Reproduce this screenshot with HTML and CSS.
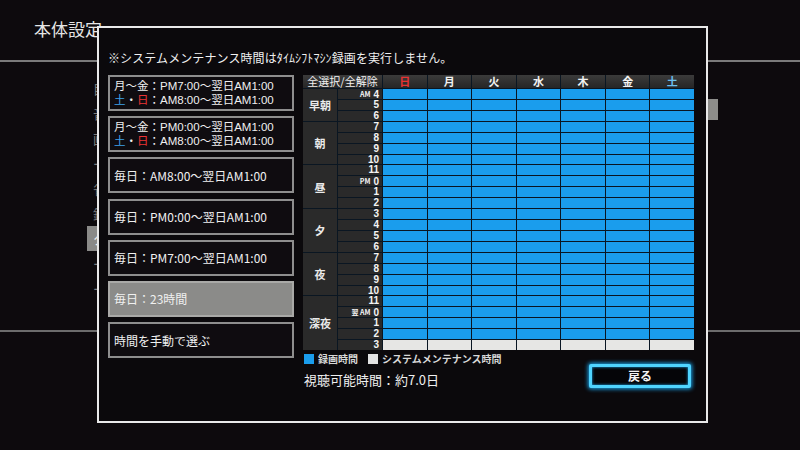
FILE: index.html
```html
<!DOCTYPE html>
<html lang="ja">
<head>
<meta charset="utf-8">
<link rel="stylesheet" href="styles.css">
</head>
<body>
<div class="screen">
  <div class="screen-head"><span class="screen-title">本体設定</span></div>
  <div class="screen-mid">
    <ul class="bg-menu">
      <li>目</li><li>音</li><li>画</li><li>ー</li><li>省</li><li>録</li><li class="sel">タ</li><li>ー</li><li>ー</li>
    </ul>
  </div>
  <div class="screen-foot"></div>
  <div class="scroll-thumb"></div>
</div>

<div class="dialog">
  <p class="notice">※システムメンテナンス時間は<span class="hw">ﾀｲﾑｼﾌﾄﾏｼﾝ</span>録画を実行しません。</p>
  <div class="dlg-body">
    <div class="options">
      <div class="opt two"><span>月～金：PM7:00～翌日AM1:00</span><span><b class="sat">土</b>・<b class="sun">日</b>：AM8:00～翌日AM1:00</span></div>
      <div class="opt two"><span>月～金：PM0:00～翌日AM1:00</span><span><b class="sat">土</b>・<b class="sun">日</b>：AM8:00～翌日AM1:00</span></div>
      <div class="opt">毎日：AM8:00～翌日AM1:00</div>
      <div class="opt">毎日：PM0:00～翌日AM1:00</div>
      <div class="opt">毎日：PM7:00～翌日AM1:00</div>
      <div class="opt selected">毎日：23時間</div>
      <div class="opt">時間を手動で選ぶ</div>
    </div>
    <div class="right">
      <div class="grid">
        <div class="hd all">全選択/全解除</div>
        <div class="hd sun">日</div><div class="hd">月</div><div class="hd">火</div><div class="hd">水</div><div class="hd">木</div><div class="hd">金</div><div class="hd sat2">土</div>

        <div class="per" style="grid-row: span 3">早朝</div>
        <div class="hr"><small>AM</small>4</div><div class="c"></div><div class="c"></div><div class="c"></div><div class="c"></div><div class="c"></div><div class="c"></div><div class="c"></div>
        <div class="hr">5</div><div class="c"></div><div class="c"></div><div class="c"></div><div class="c"></div><div class="c"></div><div class="c"></div><div class="c"></div>
        <div class="hr">6</div><div class="c"></div><div class="c"></div><div class="c"></div><div class="c"></div><div class="c"></div><div class="c"></div><div class="c"></div>

        <div class="per" style="grid-row: span 4">朝</div>
        <div class="hr">7</div><div class="c"></div><div class="c"></div><div class="c"></div><div class="c"></div><div class="c"></div><div class="c"></div><div class="c"></div>
        <div class="hr">8</div><div class="c"></div><div class="c"></div><div class="c"></div><div class="c"></div><div class="c"></div><div class="c"></div><div class="c"></div>
        <div class="hr">9</div><div class="c"></div><div class="c"></div><div class="c"></div><div class="c"></div><div class="c"></div><div class="c"></div><div class="c"></div>
        <div class="hr">10</div><div class="c"></div><div class="c"></div><div class="c"></div><div class="c"></div><div class="c"></div><div class="c"></div><div class="c"></div>

        <div class="per" style="grid-row: span 4">昼</div>
        <div class="hr">11</div><div class="c"></div><div class="c"></div><div class="c"></div><div class="c"></div><div class="c"></div><div class="c"></div><div class="c"></div>
        <div class="hr"><small>PM</small>0</div><div class="c"></div><div class="c"></div><div class="c"></div><div class="c"></div><div class="c"></div><div class="c"></div><div class="c"></div>
        <div class="hr">1</div><div class="c"></div><div class="c"></div><div class="c"></div><div class="c"></div><div class="c"></div><div class="c"></div><div class="c"></div>
        <div class="hr">2</div><div class="c"></div><div class="c"></div><div class="c"></div><div class="c"></div><div class="c"></div><div class="c"></div><div class="c"></div>

        <div class="per" style="grid-row: span 4">夕</div>
        <div class="hr">3</div><div class="c"></div><div class="c"></div><div class="c"></div><div class="c"></div><div class="c"></div><div class="c"></div><div class="c"></div>
        <div class="hr">4</div><div class="c"></div><div class="c"></div><div class="c"></div><div class="c"></div><div class="c"></div><div class="c"></div><div class="c"></div>
        <div class="hr">5</div><div class="c"></div><div class="c"></div><div class="c"></div><div class="c"></div><div class="c"></div><div class="c"></div><div class="c"></div>
        <div class="hr">6</div><div class="c"></div><div class="c"></div><div class="c"></div><div class="c"></div><div class="c"></div><div class="c"></div><div class="c"></div>

        <div class="per" style="grid-row: span 4">夜</div>
        <div class="hr">7</div><div class="c"></div><div class="c"></div><div class="c"></div><div class="c"></div><div class="c"></div><div class="c"></div><div class="c"></div>
        <div class="hr">8</div><div class="c"></div><div class="c"></div><div class="c"></div><div class="c"></div><div class="c"></div><div class="c"></div><div class="c"></div>
        <div class="hr">9</div><div class="c"></div><div class="c"></div><div class="c"></div><div class="c"></div><div class="c"></div><div class="c"></div><div class="c"></div>
        <div class="hr">10</div><div class="c"></div><div class="c"></div><div class="c"></div><div class="c"></div><div class="c"></div><div class="c"></div><div class="c"></div>

        <div class="per" style="grid-row: span 5">深夜</div>
        <div class="hr">11</div><div class="c"></div><div class="c"></div><div class="c"></div><div class="c"></div><div class="c"></div><div class="c"></div><div class="c"></div>
        <div class="hr"><small>翌 AM</small>0</div><div class="c"></div><div class="c"></div><div class="c"></div><div class="c"></div><div class="c"></div><div class="c"></div><div class="c"></div>
        <div class="hr">1</div><div class="c"></div><div class="c"></div><div class="c"></div><div class="c"></div><div class="c"></div><div class="c"></div><div class="c"></div>
        <div class="hr">2</div><div class="c"></div><div class="c"></div><div class="c"></div><div class="c"></div><div class="c"></div><div class="c"></div><div class="c"></div>
        <div class="hr">3</div><div class="c m"></div><div class="c m"></div><div class="c m"></div><div class="c m"></div><div class="c m"></div><div class="c m"></div><div class="c m"></div>
      </div>
      <div class="legend">
        <span class="sw blue"></span><span class="lg">録画時間</span>
        <span class="sw white"></span><span class="lg">システムメンテナンス時間</span>
      </div>
      <div class="bottom">
        <span class="avail">視聴可能時間：約7.0日</span>
        <div class="back">戻る</div>
      </div>
    </div>
  </div>
</div>
</body>
</html>
```

FILE: styles.css
```css
html, body {
  margin: 0;
  padding: 0;
}
body {
  width: 800px;
  height: 450px;
  overflow: hidden;
  position: relative;
  background: #0d0a0d;
  font-family: "Noto Sans CJK JP", "Noto Sans", sans-serif;
  color: #f2f2f2;
}
.screen {
  width: 800px;
  height: 450px;
}
.screen-head {
  height: 62px;
  box-sizing: border-box;
  padding: 17px 0 0 34px;
  border-bottom: 2px solid #7a7a7a;
}
.screen-title {
  font-size: 17px;
  line-height: 22px;
  color: #e6e6e6;
}
.screen-mid {
  height: 268px;
  border-bottom: 2px solid #6c6c6c;
}
.bg-menu {
  list-style: none;
  margin: 0;
  padding: 14px 0 0 87px;
  font-size: 13px;
  color: #7c7c7c;
}
.bg-menu li {
  height: 25px;
  line-height: 25px;
  padding-left: 6px;
  width: 30px;
}
.bg-menu li.sel {
  background: #8a8a88;
  color: #eee;
}
.scroll-thumb {
  position: absolute;
  left: 700px;
  top: 99px;
  width: 18px;
  height: 21px;
  background: #8d8d8a;
}

.dialog {
  position: absolute;
  left: 97px;
  top: 26px;
  width: 611px;
  height: 397px;
  box-sizing: border-box;
  border: 2px solid #e9e9e9;
  background: #0b090c;
  padding: 22px 11px 0 9px;
}
.notice {
  margin: 0;
  font-size: 12px;
  line-height: 16px;
  height: 16px;
  color: #f0f0f0;
  letter-spacing: 0.1px;
}
.dlg-body {
  display: flex;
  gap: 9px;
  margin-top: 9px;
}
.options {
  width: 186px;
  display: flex;
  flex-direction: column;
  gap: 5.2px;
}
.opt {
  height: 36px;
  box-sizing: border-box;
  border: 2px solid #8e8e8e;
  background: #0f0c10;
  font-size: 12px;
  padding-left: 4px;
  display: flex;
  flex-direction: column;
  justify-content: center;
  color: #f0f0f0;
  white-space: nowrap;
}
.opt.two {
  font-family: "Liberation Sans", "Noto Sans CJK JP", sans-serif;
  line-height: 14px;
  font-size: 11.5px;
}
.opt.two span {
  display: block;
  height: 14px;
}
.opt b {
  font-weight: normal;
}
.sat {
  color: #3ea2ea;
}
.sun {
  color: #ea3434;
}
.opt.selected {
  background: #8b8b89;
  border-color: #a9a9a7;
}

.right {
  width: 391px;
  display: flex;
  flex-direction: column;
}
.grid {
  display: grid;
  grid-template-columns: 34px 44px repeat(7, 1fr);
  grid-template-rows: 13px repeat(24, 1fr);
  gap: 1px;
  height: 275px;
  background: #0a1622;
}
.hd {
  background: linear-gradient(#3b3b3b, #262626);
  font-size: 11px;
  line-height: 13px;
  text-align: center;
  color: #f2f2f2;
  font-weight: bold;
}
.hd.all {
  grid-column: span 2;
  font-weight: normal;
}
.hd.sun {
  color: #e83232;
}
.hd.sat2 {
  color: #6cc0f0;
}
.per {
  grid-column: 1;
  background: #2a2a2a;
  display: flex;
  align-items: center;
  justify-content: center;
  font-size: 11px;
  font-weight: bold;
  color: #eaeaea;
}
.hr {
  grid-column: 2;
  background: #2a2a2a;
  text-align: right;
  padding-right: 3px;
  font-size: 10px;
  line-height: 10px;
  font-weight: bold;
  color: #f4f4f4;
  font-family: "Liberation Sans", "Noto Sans CJK JP", sans-serif;
  white-space: nowrap;
  overflow: hidden;
}
.hr small {
  font-size: 7px;
  margin-right: 3px;
  font-family: "Noto Sans CJK JP", sans-serif;
  vertical-align: 1px;
}
.c {
  background: #1a9ded;
}
.c.m {
  background: #e6e6e4;
}
.legend {
  display: flex;
  align-items: center;
  height: 13px;
  margin-top: 2px;
  font-size: 10px;
  color: #d8d8d8;
  font-weight: bold;
}
.sw {
  width: 10px;
  height: 10px;
  margin-left: 1px;
  margin-right: 4px;
}
.sw.blue {
  background: #1a9ded;
}
.sw.white {
  background: #e2e2e2;
  margin-left: 10px;
}
.lg {
  line-height: 13px;
}
.bottom {
  display: flex;
  justify-content: space-between;
  align-items: flex-end;
  margin-top: -1px;
}
.avail {
  font-size: 13px;
  line-height: 16px;
  margin-left: 1px;
  color: #f0f0f0;
}
.back {
  width: 102px;
  height: 24px;
  box-sizing: border-box;
  margin-right: 3px;
  border: 3px solid #4fd4ff;
  box-shadow: 0 0 4px 1px #1aa8f0, inset 0 0 3px #1aa8f0;
  background: #050508;
  border-radius: 2px;
  font-size: 12px;
  font-weight: bold;
  line-height: 18px;
  text-align: center;
  color: #f2f2f2;
}
```
